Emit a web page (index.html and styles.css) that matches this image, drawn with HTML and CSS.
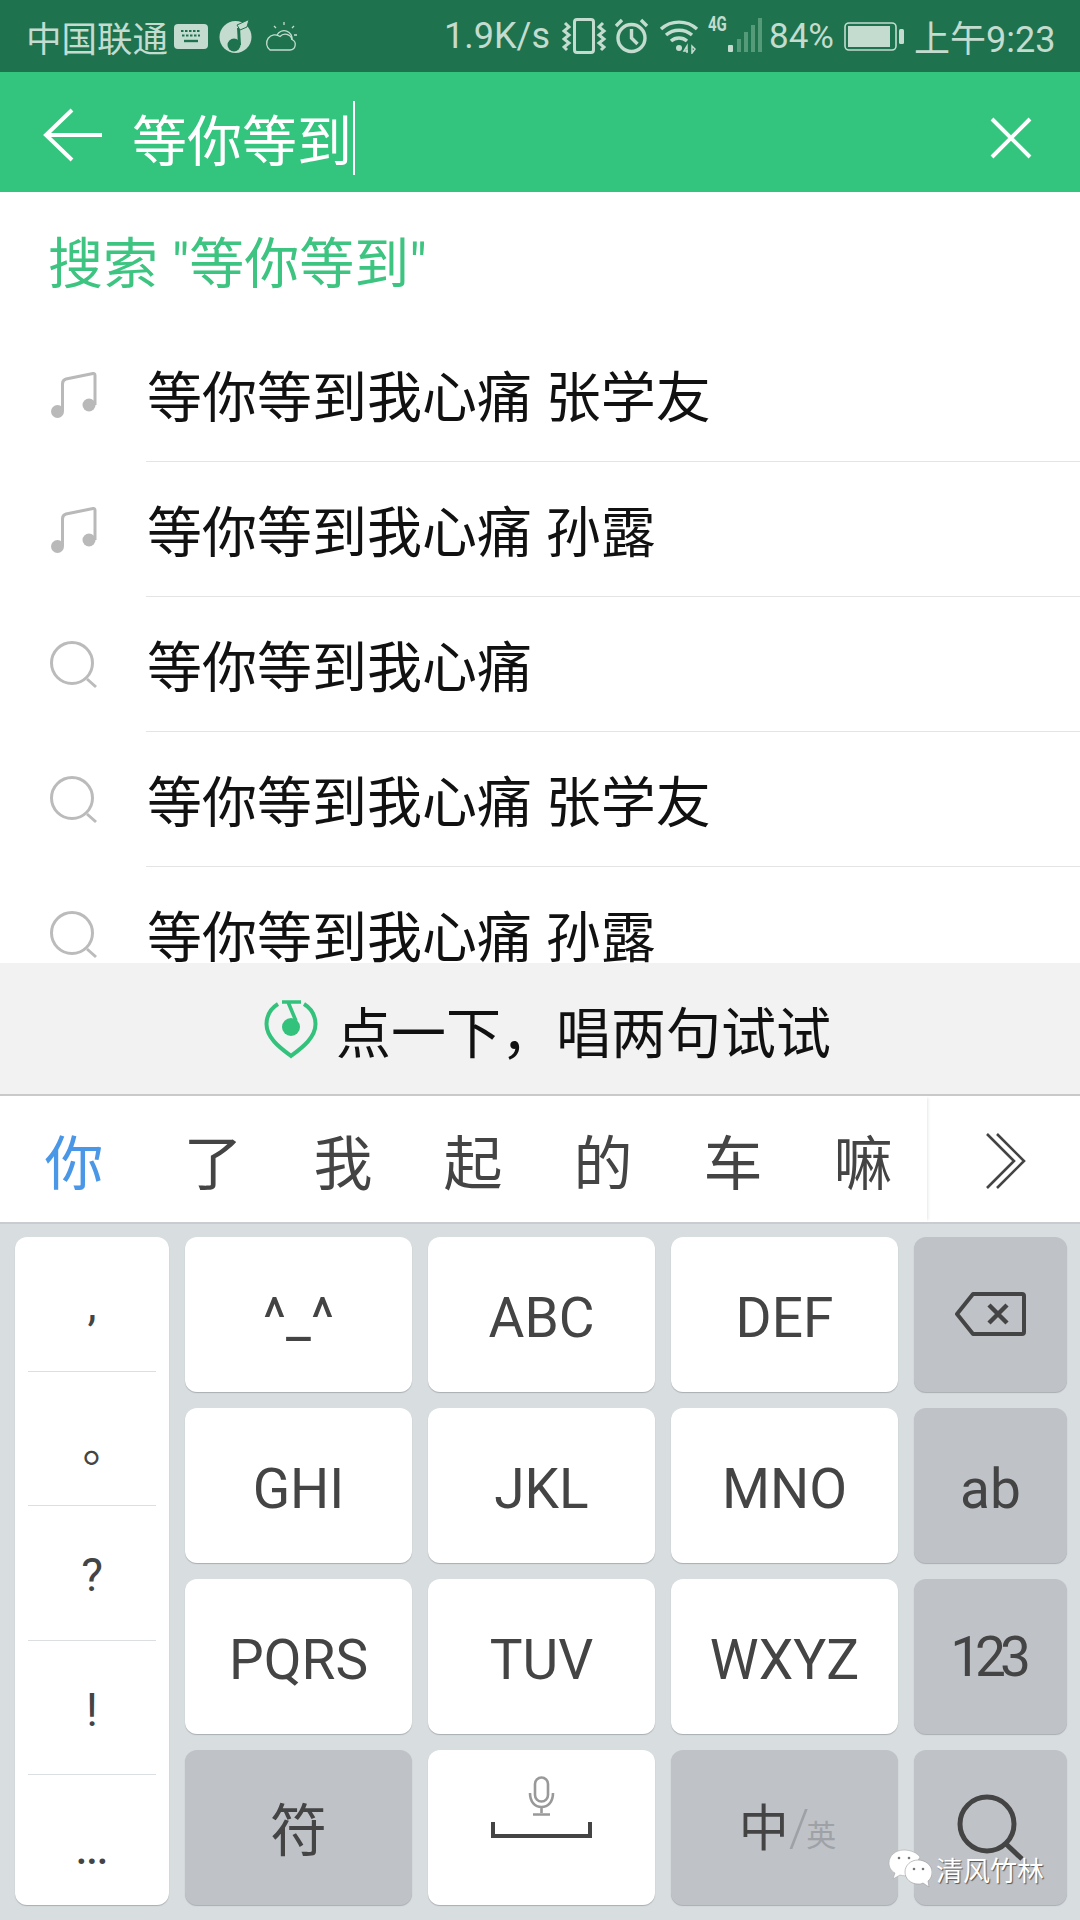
FILE: index.html
```html
<!DOCTYPE html>
<html lang="zh">
<head>
<meta charset="utf-8">
<title>搜索</title>
<link rel="stylesheet" href="styles.css">
</head>
<body>
<div class="page">
  <div class="status">
    <div class="status-left">
      <span class="carrier">中国联通</span>
      <svg class="si-kb" viewBox="0 0 34 25"><rect width="34" height="25" rx="4" fill="#c3dccf"/><path d="M7 7h20M8 11.500h18" stroke="#1e734e" stroke-width="2" stroke-dasharray="2.500 1.500"/><path d="M10 17h14" stroke="#1e734e" stroke-width="2.400"/></svg>
      <svg class="si-music" viewBox="0 0 33 34"><circle cx="16.500" cy="18" r="16" fill="#c3dccf"/><path d="M20.500 26 19.500 9" fill="none" stroke="#1e734e" stroke-width="3"/><path d="M18 6 30 .5 28 8l-7 3z" fill="#c3dccf" stroke="#1e734e" stroke-width="1"/><circle cx="15" cy="26" r="6.500" fill="#1e734e"/></svg>
      <svg class="si-cloud" viewBox="0 0 35 33" fill="none" stroke="#c3dccf" stroke-width="1.300"><path d="M7 30h20a5.500 5.500 0 0 0 2-10.500a7 7 0 0 0-12-3a6 6 0 0 0-10 13.500z"/><path d="M14 15a8 8 0 0 1 15 5M21 2v3M31 6l-2 2M34 15h-3M11 6l2 2"/></svg>
    </div>
    <div class="status-right">
      <span class="speed">1.9K/s</span>
      <svg class="si-vib" viewBox="0 0 45 36" fill="none" stroke="#c3dccf" stroke-width="3"><rect x="12.500" y="1.500" width="19" height="33" rx="2.500"/><path d="M3 5l4 4-5 4 5 4-5 4 5 4-5 4 3 3M41 5l-4 4 5 4-5 4 5 4-5 4 5 4-3 3"/></svg>
      <svg class="si-alarm" viewBox="0 0 35 36" fill="none" stroke="#c3dccf" stroke-width="3.400"><circle cx="17.500" cy="20" r="13.500"/><path d="M17.500 11v9l6 6M2 8l6-6M33 8l-6-6"/></svg>
      <svg class="si-wifi" viewBox="0 0 42 36" fill="none" stroke="#c3dccf" stroke-width="3.400"><path d="M2 11a27 27 0 0 1 36 0M7 17a20 20 0 0 1 26 0M12 23a12 12 0 0 1 16 0"/><circle cx="20" cy="30" r="3" fill="#c3dccf" stroke="none"/><path d="M28 35v-7l-3 5h4M33 28v7l3-4z" stroke-width="1.500"/></svg>
      <div class="net">
        <span class="net-label">4G</span>
        <svg class="si-signal" viewBox="0 0 34 36"><rect x="0" y="27" width="5" height="7" rx="1" fill="#c3dccf"/><rect x="9" y="21" width="4" height="13" fill="#559b7a"/><rect x="16" y="14" width="4" height="20" fill="#559b7a"/><rect x="23" y="7" width="4" height="27" fill="#559b7a"/><rect x="30" y="0" width="4" height="34" fill="#559b7a"/></svg>
      </div>
      <span class="batt-text">84%</span>
      <svg class="si-batt" viewBox="0 0 61 30"><rect x="1" y="2" width="51" height="27" rx="4" fill="none" stroke="#c3dccf" stroke-width="1.600"/><rect x="4" y="5" width="42" height="21" fill="#c3dccf"/><rect x="55" y="8" width="5" height="15" rx="1.500" fill="#c3dccf"/></svg>
      <span class="clock">上午9:23</span>
    </div>
  </div>

  <div class="appbar">
    <svg class="back" viewBox="0 0 60 54" fill="none" stroke="#fff" stroke-width="4"><path d="M59 27H3M29 2 3 27l26 25"/></svg>
    <span class="query">等你等到</span>
    <span class="cursor"></span>
    <svg class="close" viewBox="0 0 42 42" fill="none" stroke="#fff" stroke-width="4"><path d="M2 2l38 38M40 2 2 40"/></svg>
  </div>

  <div class="list">
    <div class="search-row">搜索 "等你等到"</div>
    <div class="row">
      <div class="row-icon"><svg class="i-music" viewBox="0 0 47 48"><use href="#note"/></svg></div>
      <div class="row-text">等你等到我心痛 张学友</div>
    </div>
    <div class="row">
      <div class="row-icon"><svg class="i-music" viewBox="0 0 47 48"><use href="#note"/></svg></div>
      <div class="row-text">等你等到我心痛 孙露</div>
    </div>
    <div class="row">
      <div class="row-icon"><svg class="i-search" viewBox="0 0 48 48"><use href="#lens"/></svg></div>
      <div class="row-text">等你等到我心痛</div>
    </div>
    <div class="row">
      <div class="row-icon"><svg class="i-search" viewBox="0 0 48 48"><use href="#lens"/></svg></div>
      <div class="row-text">等你等到我心痛 张学友</div>
    </div>
    <div class="row">
      <div class="row-icon"><svg class="i-search" viewBox="0 0 48 48"><use href="#lens"/></svg></div>
      <div class="row-text">等你等到我心痛 孙露</div>
    </div>
  </div>

  <div class="voice">
    <svg class="voice-icon" viewBox="0 0 54 60" fill="none" stroke="#33c27c" stroke-width="4"><path d="M14 5A24 24 0 0 0 2.500 25c0 14 14 24 24.500 32 10.500-8 24.500-18 24.500-32A24 24 0 0 0 40 5"/><path d="M18 3h19M24 3l8 19" stroke-width="3.600"/><circle cx="27" cy="28" r="9" fill="#33c27c" stroke="none"/></svg>
    <span class="voice-text">点一下，唱两句试试</span>
  </div>

  <div class="cands">
    <div class="cand-list">
      <span class="cand cand-first">你</span>
      <span class="cand">了</span>
      <span class="cand">我</span>
      <span class="cand">起</span>
      <span class="cand">的</span>
      <span class="cand">车</span>
      <span class="cand">嘛</span>
    </div>
    <div class="cand-more">
      <svg class="chev" viewBox="0 0 40 56" fill="none" stroke="#444" stroke-width="2.600"><path d="M1 1l27 27L1 55M11 1l27 27-27 27"/></svg>
    </div>
  </div>

  <div class="keyboard">
    <div class="punct">
      <div class="punct-cell"><span class="pc-comma">,</span></div>
      <div class="punct-cell"><span class="pc-stop">。</span></div>
      <div class="punct-cell"><span class="pc-q">?</span></div>
      <div class="punct-cell"><span class="pc-q">!</span></div>
      <div class="punct-cell"><span class="pc-dots">...</span></div>
    </div>
    <div class="key">^_^</div>
    <div class="key">ABC</div>
    <div class="key">DEF</div>
    <div class="key fn">
      <svg class="bksp" viewBox="0 0 71 44" fill="none" stroke="#444" stroke-width="4" stroke-linejoin="round"><path d="M18 2h49a2 2 0 0 1 2 2v36a2 2 0 0 1-2 2H18L2 22z"/><path d="M34 13l18 18M52 13 34 31" stroke-width="4.500"/></svg>
    </div>
    <div class="key">GHI</div>
    <div class="key">JKL</div>
    <div class="key">MNO</div>
    <div class="key fn">ab</div>
    <div class="key">PQRS</div>
    <div class="key">TUV</div>
    <div class="key">WXYZ</div>
    <div class="key fn key-num">123</div>
    <div class="key fn key-cjk">符</div>
    <div class="key space">
      <svg class="mic" viewBox="0 0 27 40" fill="none" stroke="#999" stroke-width="2.600"><rect x="7" y="1.500" width="13" height="24" rx="6.500"/><path d="M2 17c0 9 5 14 11.500 14S25 26 25 17M13.500 31v6M5 38.500h17"/></svg>
      <svg class="spacebar" viewBox="0 0 101 16" fill="none" stroke="#444" stroke-width="4"><path d="M2 0v14h97V0"/></svg>
    </div>
    <div class="key fn lang"><span class="lang-main">中</span><span class="lang-slash">/</span><span class="lang-sub">英</span></div>
    <div class="key fn">
      <svg class="lens" viewBox="0 0 68 68" fill="none" stroke="#444" stroke-width="5"><circle cx="30" cy="30" r="27"/><path d="M49 50l16 15"/></svg>
    </div>
  </div>

  <div class="watermark">
    <svg class="wechat" viewBox="0 0 44 40"><path d="M16 1C7 1 1 7 1 14c0 4 2 8 6 10l-2 6 7-4c3 1 6 1 9 0 7-12 10-16 11-18C29 4 23 1 16 1z" fill="#fff" stroke="#aaa" stroke-width=".6"/><path d="M30 11c-7 0-13 5-13 12s6 12 13 12c2 0 3 0 5-1l6 4-1-6c3-2 4-6 4-9 0-7-7-12-14-12z" fill="#fff" stroke="#999" stroke-width=".6"/><circle cx="11" cy="9" r="1.300" fill="#777"/><circle cx="21" cy="9" r="1.300" fill="#777"/><circle cx="26" cy="20" r="1.300" fill="#777"/><circle cx="35" cy="20" r="1.300" fill="#777"/></svg>
    <span class="wm-text">清风竹林</span>
  </div>
</div>

<svg class="defs" width="0" height="0">
  <defs>
    <g id="note" fill="#b9b9b9"><circle cx="7.500" cy="40.500" r="6.500"/><circle cx="39" cy="34" r="6.500"/><path d="M12.500 40V13q0-4 3.500-5L43 2.500q2-.3 2 2V34" fill="none" stroke="#b9b9b9" stroke-width="3"/></g>
    <g id="lens" fill="none" stroke="#bbb" stroke-width="3"><circle cx="22" cy="22" r="20.500"/><path d="M37 38l9 8"/></g>
  </defs>
</svg>
</body>
</html>
```

FILE: styles.css
```css
* { box-sizing: border-box; }
html, body { margin: 0; padding: 0; }
body {
  background: #fff;
  font-family: Roboto, "Noto Sans CJK SC", sans-serif;
}
.defs { position: absolute; }
.page {
  position: relative;
  width: 1080px;
  height: 1920px;
  overflow: hidden;
  display: flex;
  flex-direction: column;
}

/* status bar */
.status {
  height: 72px;
  flex: none;
  background: #1e734e;
  color: #c3dccf;
  display: flex;
  justify-content: space-between;
  align-items: center;
  padding: 0 25px 0 26px;
  font-size: 36px;
  white-space: nowrap;
}
.status-left, .status-right { display: flex; align-items: center; }
.carrier { width: 143px; font-size: 35.500px; }
.si-kb { width: 34px; height: 25px; margin-left: 5px; }
.si-music { width: 33px; height: 34px; margin-left: 11px; }
.si-cloud { width: 35px; height: 33px; margin-left: 11px; }
.speed { width: 105px; }
.si-vib { width: 45px; height: 36px; margin-left: 13px; }
.si-alarm { width: 35px; height: 36px; margin-left: 7px; }
.si-wifi { width: 42px; height: 36px; margin-left: 10px; }
.net { position: relative; width: 58px; height: 36px; margin-left: 5px; }
.net-label {
  position: absolute;
  left: 2px;
  top: -6px;
  font-size: 20px;
  font-weight: 700;
  transform: scaleX(.75);
  transform-origin: left;
}
.si-signal { position: absolute; left: 22px; top: 0; width: 34px; height: 36px; }
.batt-text { width: 65px; margin-left: 5px; font-size: 35px; }
.si-batt { width: 61px; height: 30px; margin-left: 10px; }
.clock { margin-left: 9px; width: 141px; }

/* app bar */
.appbar {
  height: 120px;
  flex: none;
  background: #33c57d;
  display: flex;
  align-items: center;
  padding: 12px 48px 0 43px;
  color: #fff;
}
.back { width: 60px; height: 54px; flex: none; margin-bottom: 7px; }
.query { margin-left: 29px; font-size: 55px; line-height: 74px; padding-top: 8px; }
.cursor { width: 2px; height: 74px; margin: 0 0 0 1px; background: #fff; }
.close { width: 42px; height: 42px; margin-left: auto; flex: none; }

/* list */
.list {
  height: 771px;
  flex: none;
  overflow: hidden;
  background: #fff;
}
.search-row {
  height: 135px;
  padding: 0 0 2px 48px;
  display: flex;
  align-items: center;
  color: #3cc480;
  font-size: 55px;
  white-space: pre;
}
.row {
  height: 135px;
  display: flex;
}
.row-icon {
  width: 146px;
  flex: none;
  padding-left: 50px;
  display: flex;
  align-items: center;
}
.i-music { width: 47px; height: 48px; }
.i-search { width: 48px; height: 48px; }
.row-text {
  flex: 1;
  padding: 0 0 3px 1px;
  display: flex;
  align-items: center;
  font-size: 55px;
  color: #111;
  border-bottom: 1px solid #e4e4e4;
  white-space: pre;
}

/* voice bar */
.voice {
  height: 133px;
  flex: none;
  background: #f2f2f2;
  border-bottom: 2px solid #c9c9c9;
  display: flex;
  align-items: center;
  justify-content: center;
  gap: 18px;
  padding-left: 15px;
}
.voice-icon { width: 54px; height: 60px; flex: none; }
.voice-text { font-size: 55px; color: #111; }

/* candidates */
.cands {
  height: 128px;
  flex: none;
  background: #fff;
  border-bottom: 2px solid #c8ccd0;
  display: flex;
}
.cand-list {
  width: 927px;
  flex: none;
  display: flex;
  align-items: center;
  padding-left: 9px;
  box-shadow: 3px 0 3px -2px #e4e6e8;
}
.cand {
  width: 130px;
  text-align: center;
  font-size: 59px;
  color: #444;
  flex: none;
}
.cand-first { color: #4a97e8; width: 139px; padding-right: 9px; }
.cand-more {
  flex: 1;
  display: flex;
  align-items: center;
  justify-content: center;
  padding: 4px 0 0 4px;
}
.chev { width: 40px; height: 56px; }

/* keyboard */
.keyboard {
  flex: 1;
  background: #d8dde0;
  padding: 13px 14px 16px 15px;
  display: grid;
  grid-template-columns: 154px 227px 227px 227px 153px;
  grid-template-rows: repeat(4, 155px);
  gap: 16px;
}
.punct {
  grid-row: 1 / span 4;
  background: #fff;
  border-radius: 12px;
  box-shadow: 0 1px 1px #a9adb1;
  display: flex;
  flex-direction: column;
}
.punct-cell {
  height: 134.500px;
  margin: 0 13px;
  padding-top: 5px;
  display: flex;
  align-items: center;
  justify-content: center;
  border-bottom: 1px solid #dcdfe2;
  color: #444;
  font-size: 46px;
}
.punct-cell:last-child { border-bottom: 0; flex: 1; }
.pc-comma { font-size: 46px; margin-top: -5px; }
.pc-stop { font-family: "Noto Sans CJK SC", sans-serif; font-size: 46px; margin: 0 0 0 27px; }
.pc-dots { font-size: 36px; font-weight: 700; padding-top: 18px; }
.key {
  background: #fff;
  border-radius: 12px;
  box-shadow: 0 1px 1px #a9adb1;
  display: flex;
  align-items: center;
  justify-content: center;
  font-size: 55px;
  color: #444;
  padding-top: 6px;
}
.fn { background: #bfc3c8; }
.key-num { letter-spacing: -6px; padding: 0 6px 0 0; }
.key-cjk { font-size: 57px; padding: 0 0 4px; }
.space { flex-direction: column; padding: 26px 0 0; justify-content: flex-start; gap: 6px; }
.mic { width: 27px; height: 40px; }
.spacebar { width: 101px; height: 16px; }
.lang { align-items: baseline; padding: 38px 0 0 6px; }
.lang-main { font-size: 50px; }
.lang-slash { font-size: 52px; color: #9ea2a6; font-weight: 300; }
.lang-sub { font-size: 30px; color: #9ea2a6; margin-left: -3px; }
.bksp { width: 71px; height: 44px; margin-top: -8px; }
.lens { width: 68px; height: 68px; margin-top: -6px; }

/* watermark */
.watermark {
  position: absolute;
  left: 888px;
  top: 1849px;
  display: flex;
  align-items: center;
  gap: 4px;
}
.wechat { width: 44px; height: 40px; }
.wm-text {
  font-size: 27px;
  color: #fff;
  text-shadow: 1px 1px 1px #555;
}
```
